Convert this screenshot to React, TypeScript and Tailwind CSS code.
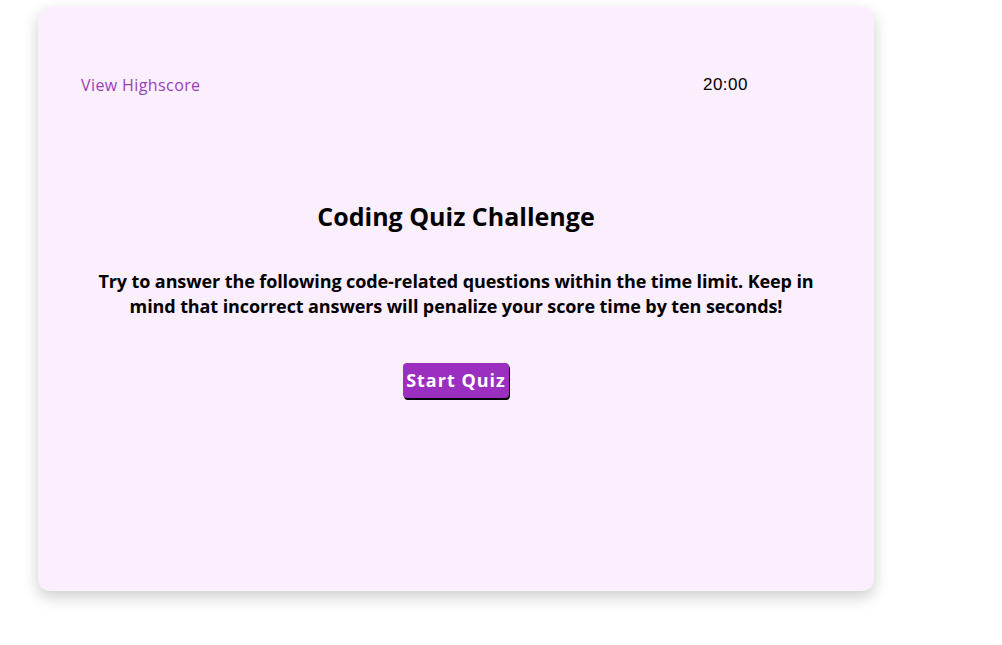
export default function App() {
  return (
    <div className="min-h-[645px] w-[1002px] bg-white pt-[7px] pl-[38px] font-['Open_Sans',sans-serif]">
      <div className="flex h-[584px] w-[836px] flex-col rounded-xl bg-[#fbeefd] shadow-[0_6px_16px_rgba(0,0,0,0.2)]">
        <div className="mt-[65px] flex items-center justify-between pl-[43px] pr-[126px]">
          <a className="text-[16px] tracking-[0.4px] text-[#9a3fb8]">View Highscore</a>
          <span className="font-['Liberation_Sans',sans-serif] text-[17px] tracking-[0.5px] text-black">20:00</span>
        </div>
        <h1 className="mt-[100px] text-center text-[25px] font-bold text-black">Coding Quiz Challenge</h1>
        <p className="mx-auto mt-[34px] w-[780px] text-center text-[18px] leading-[25px] font-bold tracking-[-0.1px] text-black">
          Try to answer the following code-related questions within the time limit. Keep in
          <br />
          mind that incorrect answers will penalize your score time by ten seconds!
        </p>
        <div className="mt-[44px] flex justify-center">
          <button className="h-[35px] rounded-[4px] bg-[#9b2fc0] px-[3px] text-[18px] font-bold tracking-[1px] text-white shadow-[1px_2px_0_#000]">
            Start Quiz
          </button>
        </div>
      </div>
    </div>
  );
}
